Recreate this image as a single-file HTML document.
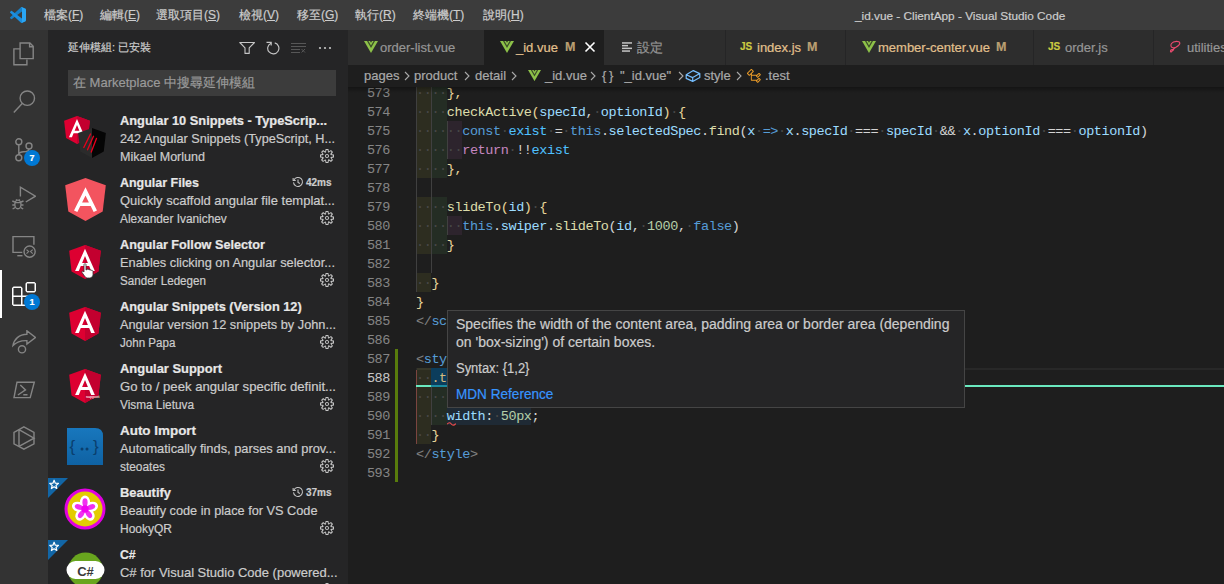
<!DOCTYPE html><html><head><meta charset="utf-8"><style>
*{margin:0;padding:0;box-sizing:border-box}
html,body{width:1224px;height:584px;overflow:hidden;background:#1e1e1e;font-family:"Liberation Sans",sans-serif;position:relative;-webkit-text-stroke-width:0.2px}
.a{position:absolute;white-space:nowrap}
#title{position:absolute;left:0;top:0;width:1224px;height:30px;background:#3c3c3c;color:#cccccc;font-size:12px}
#title u{text-decoration:underline;text-underline-offset:1px}
#title .m{position:absolute;top:8px;line-height:15px;white-space:nowrap}
#act{position:absolute;left:0;top:30px;width:48px;height:554px;background:#333333}
#side{position:absolute;left:48px;top:30px;width:300px;height:554px;background:#252526;overflow:hidden}
#tabs{position:absolute;left:348px;top:30px;width:876px;height:35px;background:#252526;overflow:hidden}
.tab{position:absolute;top:0;height:35px;background:#2d2d2d;font-size:13px;color:#969696;white-space:nowrap}
.tab .tx{position:absolute;top:10px;line-height:15px}
#crumb{position:absolute;left:348px;top:65px;width:876px;height:22px;background:#1e1e1e;color:#a9a9a9;font-size:13px;white-space:nowrap;z-index:5}
#crumb .a{top:3px;line-height:16px}
#editor{position:absolute;left:348px;top:65px;width:876px;height:519px;background:#1e1e1e;overflow:hidden}
.ln{position:absolute;left:0;width:42px;text-align:right;font-family:"Liberation Mono",monospace;font-size:13.5px;letter-spacing:-0.4px;color:#858585;height:19px;line-height:21px}
.cl{position:absolute;left:68px;height:19px;line-height:21px;font-family:"Liberation Mono",monospace;font-size:13.5px;letter-spacing:-0.4px;color:#d4d4d4;white-space:pre}
.ext .t{font-weight:bold;color:#e7e7e7;font-size:12.5px}
.ext .d{color:#cccccc;font-size:13px}
.ext .au{color:#cccccc;font-size:12px}
.cl,.ln{-webkit-text-stroke-width:0.05px}
#hover{position:absolute;left:447px;top:310px;width:518px;height:98px;background:#252526;border:1px solid #454545;color:#cccccc;font-size:14px;z-index:10}
</style></head><body>
<div id="title">
<svg class="a" style="left:10px;top:7px" width="16" height="16" viewBox="0 0 100 100"><path fill="#1680c8" d="M96.46 10.8L75.86 0.88C73.47 -0.27 70.62 0.21 68.75 2.08L1.3 63.58C-0.52 65.24 -0.51 68.09 1.3 69.75L6.81 74.75C8.3 76.1 10.53 76.2 12.13 74.99L93.36 13.37C96.09 11.3 100 13.25 100 16.67V16.43C100 14.03 98.62 11.84 96.46 10.8Z"/><path fill="#1b8fe0" d="M96.46 89.2L75.86 99.12C73.47 100.27 70.62 99.79 68.75 97.92L1.3 36.42C-0.52 34.76 -0.51 31.91 1.3 30.25L6.81 25.25C8.3 23.9 10.53 23.8 12.13 25.01L93.36 86.63C96.09 88.7 100 86.75 100 83.33V83.57C100 85.97 98.62 88.16 96.46 89.2Z"/><path fill="#2aa6f4" d="M75.86 99.13C73.47 100.27 70.62 99.79 68.75 97.92C71.06 100.22 75 98.59 75 95.33V4.67C75 1.41 71.06 -0.22 68.75 2.08C70.62 0.21 73.47 -0.27 75.86 0.87L96.46 10.78C98.62 11.82 100 14.01 100 16.41V83.59C100 85.99 98.62 88.18 96.46 89.22Z"/></svg>
<span class="m" style="left:44px;top:7.5px">檔案(<u>F</u>)</span>
<span class="m" style="left:100px;top:7.5px">編輯(<u>E</u>)</span>
<span class="m" style="left:156px;top:7.5px">選取項目(<u>S</u>)</span>
<span class="m" style="left:239px;top:7.5px">檢視(<u>V</u>)</span>
<span class="m" style="left:297px;top:7.5px">移至(<u>G</u>)</span>
<span class="m" style="left:355px;top:7.5px">執行(<u>R</u>)</span>
<span class="m" style="left:413px;top:7.5px">終端機(<u>T</u>)</span>
<span class="m" style="left:483px;top:7.5px">說明(<u>H</u>)</span>
<span class="m" style="left:855px;font-size:11.8px;top:9px">_id.vue - ClientApp - Visual Studio Code</span>
</div>
<div id="act">
<svg class="a" style="left:12px;top:12px" width="24" height="24" viewBox="0 0 24 24" fill="none" stroke="#858585" stroke-width="1.4"><path d="M8 6.9 H1.9 V22.8 H14.9 V17.6"/><path d="M8.1 1 H17.9 L21.2 4.3 V16.6 H8.1 Z"/><path d="M17.6 1 V4.7 H21.2"/></svg>
<svg class="a" style="left:12px;top:60px" width="24" height="24" viewBox="0 0 24 24" fill="none" stroke="#858585" stroke-width="1.4"><circle cx="15.3" cy="8.2" r="7.2"/><path d="M10.2 13.4 L1.8 22.4"/></svg>
<svg class="a" style="left:12px;top:108px" width="24" height="24" viewBox="0 0 24 24" fill="none" stroke="#858585" stroke-width="1.4"><circle cx="6.8" cy="3.8" r="3"/><circle cx="6.8" cy="19.8" r="3"/><circle cx="17" cy="8" r="3"/><path d="M6.8 6.8 V16.8 M17 11 C17 13.5 15 13.8 11.5 13.8 C9 13.8 7.5 14.5 6.8 16"/></svg>
<svg class="a" style="left:12px;top:156px" width="24" height="24" viewBox="0 0 24 24" fill="none" stroke="#858585" stroke-width="1.4"><path d="M8.4 10.5 V1.2 L23.4 10.2 L13.8 16"/><ellipse cx="5.9" cy="18.4" rx="3.1" ry="4.3"/><path d="M3 16.6 H8.8 M0.3 15 L2.8 16 M11.5 15 L9 16 M0.3 19 H2.7 M11.5 19 H9.1 M0.6 23 L3 21.6 M11.2 23 L8.8 21.6 M4 13.6 L5 14.6 M7.8 13.6 L6.8 14.6"/></svg>
<svg class="a" style="left:12px;top:204px" width="24" height="24" viewBox="0 0 24 24" fill="none" stroke="#858585" stroke-width="1.4"><path d="M21.9 10.8 V2.6 H1 V18.4 H10.3"/><path d="M5.3 21.7 H10.5"/><circle cx="17.6" cy="17.6" r="5.6"/><path d="M14.5 15.6 L16.6 17.6 L14.5 19.6 M20.7 15.6 L18.6 17.6 L20.7 19.6" stroke-width="1.2"/></svg>
<div class="a" style="left:0;top:240px;width:2px;height:48px;background:#ffffff"></div>
<svg class="a" style="left:12px;top:252px" width="24" height="24" viewBox="0 0 24 24" fill="#ffffff"><path d="M13.5 1.5L15 0h7.5L24 1.5V9l-1.5 1.5H15L13.5 9V1.5zm9 0H15V9h7.5V1.5zM0 15V6l1.5-1.5H9L10.5 6v7.5H18l1.5 1.5v7.5L18 24H1.5L0 22.5V15zm9-1.5V6H1.5v7.5H9zM9 15H1.5v7.5H9V15zm1.5 7.5H18V15h-7.5v7.5z"/></svg>
<svg class="a" style="left:12px;top:300px" width="24" height="24" viewBox="0 0 24 24" fill="none" stroke="#858585" stroke-width="1.4"><path d="M1 15.5 C2 9.5 7 4.3 14.9 4.3 V0.8 L23.4 7.5 L14.9 14 V10.6 C9 10.4 4.5 11.8 1 15.5 Z"/><circle cx="10" cy="19.3" r="3.6"/></svg>
<svg class="a" style="left:12px;top:348px" width="24" height="24" viewBox="0 0 24 24" fill="none" stroke="#858585" stroke-width="1.4"><path d="M5 4.2 H22.3 L18.2 19.6 H2 Z"/><path d="M8.3 7 L13.5 11.9 L5.9 17 M11.3 16.8 H15.5"/></svg>
<svg class="a" style="left:12px;top:396px" width="24" height="24" viewBox="0 0 24 24" fill="none" stroke="#858585" stroke-width="1.4"><path d="M11.9 0.8 L22 6.4 V17.9 L11.9 23.2 L2 17.9 V6.4 Z"/><path d="M7 3.6 V20.3 M7 3.6 L22 12.2 L7 20.3"/></svg>
<div class="a" style="left:24px;top:120px;width:16px;height:16px;border-radius:8px;background:#0078d4;color:#fff;font-size:9px;font-weight:bold;text-align:center;line-height:16px">7</div>
<div class="a" style="left:24px;top:264px;width:16px;height:16px;border-radius:8px;background:#0078d4;color:#fff;font-size:9px;font-weight:bold;text-align:center;line-height:16px">1</div>
</div>
<div id="side">
<span class="a" style="left:20px;top:10px;line-height:15px;font-size:11px;color:#cccccc">延伸模組: 已安裝</span>
<svg class="a" style="left:190px;top:11px" width="18" height="14" viewBox="0 0 18 14" fill="none" stroke="#c5c5c5" stroke-width="1.1" stroke-linejoin="round"><path d="M1.8 1.5 H16.5 L11.2 6.9 V12.4 H7 V6.9 Z"/></svg>
<svg class="a" style="left:218px;top:11px" width="14" height="14" viewBox="0 0 14 14" fill="none" stroke="#c5c5c5" stroke-width="1.15"><path d="M5.02 2.19 A5.6 5.6 0 1 0 8.75 1.89"/><path d="M0.5 1.3 H5.2 V4.5"/></svg>
<svg class="a" style="left:243px;top:12px" width="16" height="12" viewBox="0 0 16 12" fill="none" stroke="#575757" stroke-width="1"><path d="M0 1.5 H15 M0 4.5 H15 M0 7.5 H9 M0 10.5 H9 M10.5 7 L14 10.5 M14 7 L10.5 10.5"/></svg>
<svg class="a" style="left:269px;top:10px" width="16" height="16" viewBox="0 0 16 16" fill="#c5c5c5"><circle cx="3" cy="8" r="1.1"/><circle cx="8" cy="8" r="1.1"/><circle cx="13" cy="8" r="1.1"/></svg>
<div class="a" style="left:20px;top:40px;width:268px;height:26px;background:#3c3c3c"></div>
<span class="a" style="left:25px;top:45px;line-height:16px;font-size:13px;color:#9a9a9a">在 Marketplace 中搜尋延伸模組</span>
<div class="ext">
<span class="a t" style="left:72px;top:83px;line-height:16px;transform:scaleX(1.0253);transform-origin:0 0;">Angular 10 Snippets - TypeScrip...</span>
<span class="a d" style="left:72px;top:101px;line-height:16px;transform:scaleX(0.9755);transform-origin:0 0;">242 Angular Snippets (TypeScript, H...</span>
<span class="a au" style="left:72px;top:119px;line-height:16px;transform:scaleX(1.0442);transform-origin:0 0;">Mikael Morlund</span>
<svg class="a" style="left:271px;top:118px" width="16" height="16" viewBox="0 0 16 16" fill="#c5c5c5"><path fill-rule="evenodd" d="M9.1 4.4L8.6 2H7.4l-.5 2.4-.7.3-2-1.3-.9.8 1.3 2-.2.7-2.4.5v1.2l2.4.5.3.8-1.3 2 .8.8 2-1.3.8.3.4 2.3h1.2l.5-2.4.8-.3 2 1.3.8-.8-1.3-2 .3-.8 2.3-.4V7.4l-2.4-.5-.3-.8 1.3-2-.8-.8-2 1.3-.7-.2zM9.4 1l.5 2.4L12 2.1l2 2-1.4 2.1 2.4.4v2.8l-2.4.5L14 12l-2 2-2.1-1.4-.5 2.4H6.6l-.5-2.4L4 13.9l-2-2 1.4-2.1L1 9.4V6.6l2.4-.5L2.1 4l2-2 2.1 1.4.4-2.4h2.8zm.6 7c0 1.1-.9 2-2 2s-2-.9-2-2 .9-2 2-2 2 .9 2 2zM8 9c.6 0 1-.4 1-1s-.4-1-1-1-1 .4-1 1 .4 1 1 1z"/></svg>
</div>
<div class="ext">
<span class="a t" style="left:72px;top:145px;line-height:16px;transform:scaleX(0.9975);transform-origin:0 0;">Angular Files</span>
<span class="a d" style="left:72px;top:163px;line-height:16px;transform:scaleX(0.9995);transform-origin:0 0;">Quickly scaffold angular file templat...</span>
<span class="a au" style="left:72px;top:181px;line-height:16px;transform:scaleX(0.9880);transform-origin:0 0;">Alexander Ivanichev</span>
<svg class="a" style="left:271px;top:180px" width="16" height="16" viewBox="0 0 16 16" fill="#c5c5c5"><path fill-rule="evenodd" d="M9.1 4.4L8.6 2H7.4l-.5 2.4-.7.3-2-1.3-.9.8 1.3 2-.2.7-2.4.5v1.2l2.4.5.3.8-1.3 2 .8.8 2-1.3.8.3.4 2.3h1.2l.5-2.4.8-.3 2 1.3.8-.8-1.3-2 .3-.8 2.3-.4V7.4l-2.4-.5-.3-.8 1.3-2-.8-.8-2 1.3-.7-.2zM9.4 1l.5 2.4L12 2.1l2 2-1.4 2.1 2.4.4v2.8l-2.4.5L14 12l-2 2-2.1-1.4-.5 2.4H6.6l-.5-2.4L4 13.9l-2-2 1.4-2.1L1 9.4V6.6l2.4-.5L2.1 4l2-2 2.1 1.4.4-2.4h2.8zm.6 7c0 1.1-.9 2-2 2s-2-.9-2-2 .9-2 2-2 2 .9 2 2zM8 9c.6 0 1-.4 1-1s-.4-1-1-1-1 .4-1 1 .4 1 1 1z"/></svg>
<svg class="a" style="left:244px;top:146px" width="12" height="12" viewBox="0 0 16 16" fill="none" stroke="#c5c5c5" stroke-width="1.4"><path d="M2.5 5.5 A6 6 0 1 1 2 8.5"/><path d="M1.5 2.5 V6 H5"/><path d="M8 4.5 V8.5 L10.5 10"/></svg>
<span class="a" style="left:258px;top:146px;line-height:14px;font-size:10px;font-weight:bold;color:#cccccc">42ms</span>
</div>
<div class="ext">
<span class="a t" style="left:72px;top:207px;line-height:16px;transform:scaleX(1.0133);transform-origin:0 0;">Angular Follow Selector</span>
<span class="a d" style="left:72px;top:225px;line-height:16px;transform:scaleX(0.9849);transform-origin:0 0;">Enables clicking on Angular selector...</span>
<span class="a au" style="left:72px;top:243px;line-height:16px;transform:scaleX(0.9685);transform-origin:0 0;">Sander Ledegen</span>
<svg class="a" style="left:271px;top:242px" width="16" height="16" viewBox="0 0 16 16" fill="#c5c5c5"><path fill-rule="evenodd" d="M9.1 4.4L8.6 2H7.4l-.5 2.4-.7.3-2-1.3-.9.8 1.3 2-.2.7-2.4.5v1.2l2.4.5.3.8-1.3 2 .8.8 2-1.3.8.3.4 2.3h1.2l.5-2.4.8-.3 2 1.3.8-.8-1.3-2 .3-.8 2.3-.4V7.4l-2.4-.5-.3-.8 1.3-2-.8-.8-2 1.3-.7-.2zM9.4 1l.5 2.4L12 2.1l2 2-1.4 2.1 2.4.4v2.8l-2.4.5L14 12l-2 2-2.1-1.4-.5 2.4H6.6l-.5-2.4L4 13.9l-2-2 1.4-2.1L1 9.4V6.6l2.4-.5L2.1 4l2-2 2.1 1.4.4-2.4h2.8zm.6 7c0 1.1-.9 2-2 2s-2-.9-2-2 .9-2 2-2 2 .9 2 2zM8 9c.6 0 1-.4 1-1s-.4-1-1-1-1 .4-1 1 .4 1 1 1z"/></svg>
</div>
<div class="ext">
<span class="a t" style="left:72px;top:269px;line-height:16px;transform:scaleX(1.0219);transform-origin:0 0;">Angular Snippets (Version 12)</span>
<span class="a d" style="left:72px;top:287px;line-height:16px;transform:scaleX(0.9800);transform-origin:0 0;">Angular version 12 snippets by John...</span>
<span class="a au" style="left:72px;top:305px;line-height:16px;transform:scaleX(0.9652);transform-origin:0 0;">John Papa</span>
<svg class="a" style="left:271px;top:304px" width="16" height="16" viewBox="0 0 16 16" fill="#c5c5c5"><path fill-rule="evenodd" d="M9.1 4.4L8.6 2H7.4l-.5 2.4-.7.3-2-1.3-.9.8 1.3 2-.2.7-2.4.5v1.2l2.4.5.3.8-1.3 2 .8.8 2-1.3.8.3.4 2.3h1.2l.5-2.4.8-.3 2 1.3.8-.8-1.3-2 .3-.8 2.3-.4V7.4l-2.4-.5-.3-.8 1.3-2-.8-.8-2 1.3-.7-.2zM9.4 1l.5 2.4L12 2.1l2 2-1.4 2.1 2.4.4v2.8l-2.4.5L14 12l-2 2-2.1-1.4-.5 2.4H6.6l-.5-2.4L4 13.9l-2-2 1.4-2.1L1 9.4V6.6l2.4-.5L2.1 4l2-2 2.1 1.4.4-2.4h2.8zm.6 7c0 1.1-.9 2-2 2s-2-.9-2-2 .9-2 2-2 2 .9 2 2zM8 9c.6 0 1-.4 1-1s-.4-1-1-1-1 .4-1 1 .4 1 1 1z"/></svg>
</div>
<div class="ext">
<span class="a t" style="left:72px;top:331px;line-height:16px;transform:scaleX(1.0345);transform-origin:0 0;">Angular Support</span>
<span class="a d" style="left:72px;top:349px;line-height:16px;transform:scaleX(1.0098);transform-origin:0 0;">Go to / peek angular specific definit...</span>
<span class="a au" style="left:72px;top:367px;line-height:16px;transform:scaleX(0.9840);transform-origin:0 0;">Visma Lietuva</span>
<svg class="a" style="left:271px;top:366px" width="16" height="16" viewBox="0 0 16 16" fill="#c5c5c5"><path fill-rule="evenodd" d="M9.1 4.4L8.6 2H7.4l-.5 2.4-.7.3-2-1.3-.9.8 1.3 2-.2.7-2.4.5v1.2l2.4.5.3.8-1.3 2 .8.8 2-1.3.8.3.4 2.3h1.2l.5-2.4.8-.3 2 1.3.8-.8-1.3-2 .3-.8 2.3-.4V7.4l-2.4-.5-.3-.8 1.3-2-.8-.8-2 1.3-.7-.2zM9.4 1l.5 2.4L12 2.1l2 2-1.4 2.1 2.4.4v2.8l-2.4.5L14 12l-2 2-2.1-1.4-.5 2.4H6.6l-.5-2.4L4 13.9l-2-2 1.4-2.1L1 9.4V6.6l2.4-.5L2.1 4l2-2 2.1 1.4.4-2.4h2.8zm.6 7c0 1.1-.9 2-2 2s-2-.9-2-2 .9-2 2-2 2 .9 2 2zM8 9c.6 0 1-.4 1-1s-.4-1-1-1-1 .4-1 1 .4 1 1 1z"/></svg>
</div>
<div class="ext">
<span class="a t" style="left:72px;top:393px;line-height:16px;transform:scaleX(1.0734);transform-origin:0 0;">Auto Import</span>
<span class="a d" style="left:72px;top:411px;line-height:16px;transform:scaleX(0.9877);transform-origin:0 0;">Automatically finds, parses and prov...</span>
<span class="a au" style="left:72px;top:429px;line-height:16px;transform:scaleX(0.9912);transform-origin:0 0;">steoates</span>
<svg class="a" style="left:271px;top:428px" width="16" height="16" viewBox="0 0 16 16" fill="#c5c5c5"><path fill-rule="evenodd" d="M9.1 4.4L8.6 2H7.4l-.5 2.4-.7.3-2-1.3-.9.8 1.3 2-.2.7-2.4.5v1.2l2.4.5.3.8-1.3 2 .8.8 2-1.3.8.3.4 2.3h1.2l.5-2.4.8-.3 2 1.3.8-.8-1.3-2 .3-.8 2.3-.4V7.4l-2.4-.5-.3-.8 1.3-2-.8-.8-2 1.3-.7-.2zM9.4 1l.5 2.4L12 2.1l2 2-1.4 2.1 2.4.4v2.8l-2.4.5L14 12l-2 2-2.1-1.4-.5 2.4H6.6l-.5-2.4L4 13.9l-2-2 1.4-2.1L1 9.4V6.6l2.4-.5L2.1 4l2-2 2.1 1.4.4-2.4h2.8zm.6 7c0 1.1-.9 2-2 2s-2-.9-2-2 .9-2 2-2 2 .9 2 2zM8 9c.6 0 1-.4 1-1s-.4-1-1-1-1 .4-1 1 .4 1 1 1z"/></svg>
</div>
<div class="ext">
<span class="a t" style="left:72px;top:455px;line-height:16px;transform:scaleX(1.0345);transform-origin:0 0;">Beautify</span>
<span class="a d" style="left:72px;top:473px;line-height:16px;transform:scaleX(0.9797);transform-origin:0 0;">Beautify code in place for VS Code</span>
<span class="a au" style="left:72px;top:491px;line-height:16px;transform:scaleX(1.0000);transform-origin:0 0;">HookyQR</span>
<svg class="a" style="left:271px;top:490px" width="16" height="16" viewBox="0 0 16 16" fill="#c5c5c5"><path fill-rule="evenodd" d="M9.1 4.4L8.6 2H7.4l-.5 2.4-.7.3-2-1.3-.9.8 1.3 2-.2.7-2.4.5v1.2l2.4.5.3.8-1.3 2 .8.8 2-1.3.8.3.4 2.3h1.2l.5-2.4.8-.3 2 1.3.8-.8-1.3-2 .3-.8 2.3-.4V7.4l-2.4-.5-.3-.8 1.3-2-.8-.8-2 1.3-.7-.2zM9.4 1l.5 2.4L12 2.1l2 2-1.4 2.1 2.4.4v2.8l-2.4.5L14 12l-2 2-2.1-1.4-.5 2.4H6.6l-.5-2.4L4 13.9l-2-2 1.4-2.1L1 9.4V6.6l2.4-.5L2.1 4l2-2 2.1 1.4.4-2.4h2.8zm.6 7c0 1.1-.9 2-2 2s-2-.9-2-2 .9-2 2-2 2 .9 2 2zM8 9c.6 0 1-.4 1-1s-.4-1-1-1-1 .4-1 1 .4 1 1 1z"/></svg>
<svg class="a" style="left:244px;top:456px" width="12" height="12" viewBox="0 0 16 16" fill="none" stroke="#c5c5c5" stroke-width="1.4"><path d="M2.5 5.5 A6 6 0 1 1 2 8.5"/><path d="M1.5 2.5 V6 H5"/><path d="M8 4.5 V8.5 L10.5 10"/></svg>
<span class="a" style="left:258px;top:456px;line-height:14px;font-size:10px;font-weight:bold;color:#cccccc">37ms</span>
</div>
<div class="ext">
<span class="a t" style="left:72px;top:517px;line-height:16px;transform:scaleX(0.9812);transform-origin:0 0;">C#</span>
<span class="a d" style="left:72px;top:535px;line-height:16px;transform:scaleX(0.9977);transform-origin:0 0;">C# for Visual Studio Code (powered...</span>
<span class="a au" style="left:72px;top:553px;line-height:16px;transform:scaleX(1.0000);transform-origin:0 0;">Microsoft</span>
<svg class="a" style="left:271px;top:552px" width="16" height="16" viewBox="0 0 16 16" fill="#c5c5c5"><path fill-rule="evenodd" d="M9.1 4.4L8.6 2H7.4l-.5 2.4-.7.3-2-1.3-.9.8 1.3 2-.2.7-2.4.5v1.2l2.4.5.3.8-1.3 2 .8.8 2-1.3.8.3.4 2.3h1.2l.5-2.4.8-.3 2 1.3.8-.8-1.3-2 .3-.8 2.3-.4V7.4l-2.4-.5-.3-.8 1.3-2-.8-.8-2 1.3-.7-.2zM9.4 1l.5 2.4L12 2.1l2 2-1.4 2.1 2.4.4v2.8l-2.4.5L14 12l-2 2-2.1-1.4-.5 2.4H6.6l-.5-2.4L4 13.9l-2-2 1.4-2.1L1 9.4V6.6l2.4-.5L2.1 4l2-2 2.1 1.4.4-2.4h2.8zm.6 7c0 1.1-.9 2-2 2s-2-.9-2-2 .9-2 2-2 2 .9 2 2zM8 9c.6 0 1-.4 1-1s-.4-1-1-1-1 .4-1 1 .4 1 1 1z"/></svg>
</div>
<svg class="a" style="left:16px;top:86px" width="26" height="28" viewBox="31 30 188 200" preserveAspectRatio="none"><polygon fill="#dd0031" points="125,30 31.9,63.2 46.1,186.3 125,230 203.9,186.3 218.1,63.2"/><polygon fill="#c3002f" points="125,30 125,230 203.9,186.3 218.1,63.2"/><path fill="#fff" d="M125,52.1L66.8,182.6h21.7l11.7-29.2h49.4l11.7,29.2h21.7L125,52.1z M142,135.4H108l17-40.9L142,135.4z"/></svg>
<svg class="a" style="left:30px;top:98px" width="28" height="30" viewBox="31 30 188 200" preserveAspectRatio="none"><polygon fill="#2b2b2b" points="125,30 31.9,63.2 46.1,186.3 125,230"/><polygon fill="#050505" points="125,30 125,230 203.9,186.3 218.1,63.2"/><path d="M70 160 L115 70 M95 175 L135 85 M120 190 L155 100" stroke="#e8001c" stroke-width="9" stroke-linecap="round"/></svg>
<svg class="a" style="left:17px;top:148px" width="41" height="43" viewBox="31 30 188 200" preserveAspectRatio="none"><polygon fill="#f3545f" points="125,30 31.9,63.2 46.1,186.3 125,230 203.9,186.3 218.1,63.2"/><path d="M80 185 L125 92 L170 185 M98 152 H152" fill="none" stroke="#fff" stroke-width="17"/></svg>
<svg class="a" style="left:21px;top:215px" width="32" height="34" viewBox="31 30 188 200" preserveAspectRatio="none"><polygon fill="#dd0031" points="125,30 31.9,63.2 46.1,186.3 125,230 203.9,186.3 218.1,63.2"/><polygon fill="#c3002f" points="125,30 125,230 203.9,186.3 218.1,63.2"/><path fill="#fff" d="M125,52.1L66.8,182.6h21.7l11.7-29.2h49.4l11.7,29.2h21.7L125,52.1z M142,135.4H108l17-40.9L142,135.4z"/></svg>
<svg class="a" style="left:33px;top:233px" width="14" height="16" viewBox="0 0 14 16"><path d="M3 1.5 C3 0.5 5 0.5 5 1.5 V7 L6 6.5 C6.5 6 8 6 8 7 C8.5 6.5 10 6.5 10 7.5 C10.5 7 12 7.3 12 8.5 V11.5 C12 13.5 10.5 15 8.5 15 H6.5 C5 15 4.5 14 3.5 13 L1 9.5 C0.5 8.5 1.5 7.8 2.3 8.4 L3 9 Z" fill="#fff" stroke="#333" stroke-width="0.8"/></svg>
<svg class="a" style="left:21px;top:277px" width="32" height="34" viewBox="31 30 188 200" preserveAspectRatio="none"><polygon fill="#dd0031" points="125,30 31.9,63.2 46.1,186.3 125,230 203.9,186.3 218.1,63.2"/><polygon fill="#c3002f" points="125,30 125,230 203.9,186.3 218.1,63.2"/><path fill="#fff" d="M125,52.1L66.8,182.6h21.7l11.7-29.2h49.4l11.7,29.2h21.7L125,52.1z M142,135.4H108l17-40.9L142,135.4z"/></svg>
<svg class="a" style="left:21px;top:339px" width="32" height="34" viewBox="31 30 188 200" preserveAspectRatio="none"><polygon fill="#dd0031" points="125,30 31.9,63.2 46.1,186.3 125,230 203.9,186.3 218.1,63.2"/><polygon fill="#c3002f" points="125,30 125,230 203.9,186.3 218.1,63.2"/><path fill="#fff" d="M125,52.1L66.8,182.6h21.7l11.7-29.2h49.4l11.7,29.2h21.7L125,52.1z M142,135.4H108l17-40.9L142,135.4z"/></svg>
<span class="a" style="left:38px;top:364px;font-size:4px;line-height:5px;color:#f4c0c8">support</span>
<svg class="a" style="left:19px;top:398px" width="36" height="37" viewBox="0 0 36 37"><defs><linearGradient id="ai" x1="0" y1="0" x2="0" y2="1"><stop offset="0" stop-color="#1877bd"/><stop offset="1" stop-color="#0f62a3"/></linearGradient></defs><path d="M0 0 H28 Q36 0 36 8 V37 H0 Z" fill="url(#ai)"/><text x="2.5" y="24" font-family="Liberation Sans" font-size="17" fill="#0a3f6e">{</text><text x="26" y="24" font-family="Liberation Sans" font-size="17" fill="#0a3f6e">}</text><circle cx="15" cy="21" r="1.5" fill="#0a3f6e"/><circle cx="20" cy="21" r="1.5" fill="#0a3f6e"/></svg>
<svg class="a" style="left:16px;top:458px" width="42" height="42" viewBox="0 0 42 42"><circle cx="21" cy="21" r="19" fill="#e3cc00" stroke="#e000e0" stroke-width="3"/><g fill="#ffffff"><ellipse cx="21" cy="14" rx="5" ry="6.5" transform="rotate(0 21 21)"/><ellipse cx="21" cy="14" rx="5" ry="6.5" transform="rotate(72 21 21)"/><ellipse cx="21" cy="14" rx="5" ry="6.5" transform="rotate(144 21 21)"/><ellipse cx="21" cy="14" rx="5" ry="6.5" transform="rotate(216 21 21)"/><ellipse cx="21" cy="14" rx="5" ry="6.5" transform="rotate(288 21 21)"/></g><g fill="#f030f0"><ellipse cx="21" cy="14.5" rx="2.6" ry="4.2" transform="rotate(0 21 21)"/><ellipse cx="21" cy="14.5" rx="2.6" ry="4.2" transform="rotate(72 21 21)"/><ellipse cx="21" cy="14.5" rx="2.6" ry="4.2" transform="rotate(144 21 21)"/><ellipse cx="21" cy="14.5" rx="2.6" ry="4.2" transform="rotate(216 21 21)"/><ellipse cx="21" cy="14.5" rx="2.6" ry="4.2" transform="rotate(288 21 21)"/></g><circle cx="21" cy="21" r="3.8" fill="#f000f0"/></svg>
<svg class="a" style="left:18px;top:521px" width="40" height="40" viewBox="0 0 40 40"><circle cx="19.5" cy="19" r="17.5" fill="#68a51e"/><rect x="0.5" y="10" width="38" height="18" fill="#fff" rx="9"/><text x="19.5" y="24.5" text-anchor="middle" font-family="Liberation Sans" font-weight="bold" font-size="13" fill="#3a3a3a">C#</text></svg>
<svg class="a" style="left:0;top:448px" width="20" height="20" viewBox="0 0 20 20"><polygon points="0,0 20,0 0,20" fill="#1266a6"/><polygon fill="none" stroke="#fff" stroke-width="1.2" stroke-linejoin="round" points="6.10,2.20 7.28,5.18 10.47,5.38 8.00,7.42 8.80,10.52 6.10,8.80 3.40,10.52 4.20,7.42 1.73,5.38 4.92,5.18"/></svg>
<svg class="a" style="left:0;top:510px" width="20" height="20" viewBox="0 0 20 20"><polygon points="0,0 20,0 0,20" fill="#1266a6"/><polygon fill="none" stroke="#fff" stroke-width="1.2" stroke-linejoin="round" points="6.10,2.20 7.28,5.18 10.47,5.38 8.00,7.42 8.80,10.52 6.10,8.80 3.40,10.52 4.20,7.42 1.73,5.38 4.92,5.18"/></svg>
</div>
<div id="tabs">
<div class="tab" style="left:0px;width:136px;background:#2d2d2d">
<svg class="a" style="left:16px;top:11px" width="14" height="12.0" viewBox="0 0 14 12"><polygon fill="#8dc149" points="0,0 14,0 7,12"/><polygon fill="#3a4a28" points="3,0 11,0 7,7"/><polygon fill="#8dc149" points="4.4,0 9.6,0 7,4.5"/><polygon fill="#2f3a22" points="6,0 8,0 7,1.7"/></svg>
<span class="tx" style="left:32px;color:#969696">order-list.vue</span>
</div>
<div class="tab" style="left:136px;width:120px;background:#1e1e1e">
<svg class="a" style="left:16px;top:11px" width="14" height="12.0" viewBox="0 0 14 12"><polygon fill="#8dc149" points="0,0 14,0 7,12"/><polygon fill="#3a4a28" points="3,0 11,0 7,7"/><polygon fill="#8dc149" points="4.4,0 9.6,0 7,4.5"/><polygon fill="#2f3a22" points="6,0 8,0 7,1.7"/></svg>
<span class="tx" style="left:32px;color:#e2c08d">_id.vue</span>
<span class="tx" style="left:81px;color:#bb9f72;font-size:12.5px;font-weight:bold">M</span>
<svg class="a" style="left:100px;top:11px" width="12" height="12" viewBox="0 0 12 12" stroke="#ffffff" stroke-width="1.6"><path d="M1.5 1.5 L10.5 10.5 M10.5 1.5 L1.5 10.5"/></svg>
</div>
<div class="tab" style="left:256px;width:121px;background:#2d2d2d">
<svg class="a" style="left:18px;top:11px" width="12" height="12" viewBox="0 0 12 12" fill="#c5c5c5"><rect x="0" y="1.2" width="10" height="1.5"/><rect x="0" y="3.9" width="6" height="1.5"/><rect x="0" y="6.6" width="10" height="1.5"/><rect x="0" y="9.3" width="8" height="1.5"/></svg>
<span class="tx" style="left:33px;color:#969696">設定</span>
</div>
<div class="tab" style="left:378px;width:119px;background:#2d2d2d">
<span class="a" style="left:14px;top:11px;font-size:10px;font-weight:bold;color:#cbcb41;line-height:12px">JS</span>
<span class="tx" style="left:31px;color:#e2c08d">index.js</span>
<span class="tx" style="left:81px;color:#bb9f72;font-size:12.5px;font-weight:bold">M</span>
</div>
<div class="tab" style="left:498px;width:187px;background:#2d2d2d">
<svg class="a" style="left:16px;top:11px" width="14" height="12.0" viewBox="0 0 14 12"><polygon fill="#8dc149" points="0,0 14,0 7,12"/><polygon fill="#3a4a28" points="3,0 11,0 7,7"/><polygon fill="#8dc149" points="4.4,0 9.6,0 7,4.5"/><polygon fill="#2f3a22" points="6,0 8,0 7,1.7"/></svg>
<span class="tx" style="left:32px;color:#e2c08d">member-center.vue</span>
<span class="tx" style="left:150px;color:#bb9f72;font-size:12.5px;font-weight:bold">M</span>
</div>
<div class="tab" style="left:686px;width:119px;background:#2d2d2d">
<span class="a" style="left:14px;top:11px;font-size:10px;font-weight:bold;color:#cbcb41;line-height:12px">JS</span>
<span class="tx" style="left:31px;color:#969696">order.js</span>
</div>
<div class="tab" style="left:806px;width:199px;background:#2d2d2d">
<svg class="a" style="left:15px;top:10px" width="12" height="14" viewBox="0 0 12 14" fill="none" stroke="#e84a6e" stroke-width="1.2"><path d="M5.5 7.5 C2.5 8.5 0.8 5.8 2.5 3.5 C4.5 0.8 10.8 0.6 10.8 3.2 C10.8 6.2 5.5 7 4.3 9.3 C3.3 11.3 1.5 13 1.5 11 C1.5 9.5 3.8 9.3 5 10.2"/></svg>
<span class="tx" style="left:33px;color:#969696">utilities</span>
</div>
</div>
<div id="crumb">
<span class="a" style="left:16px">pages</span>
<svg class="a" style="left:55px;top:6px" width="8" height="10" viewBox="0 0 8 10" fill="none" stroke="#a9a9a9" stroke-width="1.1"><path d="M2 1 L6 5 L2 9"/></svg>
<span class="a" style="left:66px">product</span>
<svg class="a" style="left:115px;top:6px" width="8" height="10" viewBox="0 0 8 10" fill="none" stroke="#a9a9a9" stroke-width="1.1"><path d="M2 1 L6 5 L2 9"/></svg>
<span class="a" style="left:127px">detail</span>
<svg class="a" style="left:162px;top:6px" width="8" height="10" viewBox="0 0 8 10" fill="none" stroke="#a9a9a9" stroke-width="1.1"><path d="M2 1 L6 5 L2 9"/></svg>
<svg class="a" style="left:180px;top:5px" width="13" height="11.1" viewBox="0 0 14 12"><polygon fill="#8dc149" points="0,0 14,0 7,12"/><polygon fill="#3a4a28" points="3,0 11,0 7,7"/><polygon fill="#8dc149" points="4.4,0 9.6,0 7,4.5"/><polygon fill="#2f3a22" points="6,0 8,0 7,1.7"/></svg>
<span class="a" style="left:197px">_id.vue</span>
<svg class="a" style="left:241px;top:6px" width="8" height="10" viewBox="0 0 8 10" fill="none" stroke="#a9a9a9" stroke-width="1.1"><path d="M2 1 L6 5 L2 9"/></svg>
<span class="a" style="left:254px;letter-spacing:-0.5px">{ }</span>
<span class="a" style="left:272px">"_id.vue"</span>
<svg class="a" style="left:329px;top:6px" width="8" height="10" viewBox="0 0 8 10" fill="none" stroke="#a9a9a9" stroke-width="1.1"><path d="M2 1 L6 5 L2 9"/></svg>
<svg class="a" style="left:337px;top:4px" width="16" height="14" viewBox="0 0 16 14" fill="none" stroke="#75beff" stroke-width="1.2" stroke-linejoin="round"><path d="M1.2 5.8 L8.3 1.6 L14.8 4.6 L7.7 8.6 Z M1.2 5.8 V9.4 L7.7 12.4 L14.8 8.4 V4.6 M7.7 8.6 V12.4"/></svg>
<span class="a" style="left:356px">style</span>
<svg class="a" style="left:387px;top:6px" width="8" height="10" viewBox="0 0 8 10" fill="none" stroke="#a9a9a9" stroke-width="1.1"><path d="M2 1 L6 5 L2 9"/></svg>
<svg class="a" style="left:398px;top:3px" width="16" height="16" viewBox="0 0 16 16" fill="#ee9d28"><path d="M11.34 9.71h.71l2.67-2.67v-.71L13.38 5h-.7l-1.82 1.81h-5V5.56l1.86-1.86V3l-2-2H5L1 5v.71l2 2h.71l1.14-1.15v5.79l.5.5H10v.52l1.33 1.34h.71l2.67-2.67v-.71L13.37 10h-.7l-1.86 1.85h-5v-4H10v.48l1.34 1.38zm1.69-3.65l.63.63-2 2-.63-.63 2-2zm0 5l.63.63-2 2-.63-.63 2-2zM3.35 6.65l-1.29-1.3 3.29-3.29 1.3 1.29-3.3 3.3z"/></svg>
<span class="a" style="left:417px">.test</span>
</div>
<div id="editor">
<div class="a" style="left:68.0px;top:18px;width:15.4px;height:19px;background:#2d2d20"></div>
<div class="a" style="left:83.4px;top:18px;width:15.4px;height:19px;background:#242d24"></div>
<div class="a" style="left:68.0px;top:37px;width:15.4px;height:19px;background:#2d2d20"></div>
<div class="a" style="left:83.4px;top:37px;width:15.4px;height:19px;background:#242d24"></div>
<div class="a" style="left:68.0px;top:56px;width:15.4px;height:19px;background:#2d2d20"></div>
<div class="a" style="left:83.4px;top:56px;width:15.4px;height:19px;background:#242d24"></div>
<div class="a" style="left:98.8px;top:56px;width:15.4px;height:19px;background:#2d242d"></div>
<div class="a" style="left:68.0px;top:75px;width:15.4px;height:19px;background:#2d2d20"></div>
<div class="a" style="left:83.4px;top:75px;width:15.4px;height:19px;background:#242d24"></div>
<div class="a" style="left:98.8px;top:75px;width:15.4px;height:19px;background:#2d242d"></div>
<div class="a" style="left:68.0px;top:94px;width:15.4px;height:19px;background:#2d2d20"></div>
<div class="a" style="left:83.4px;top:94px;width:15.4px;height:19px;background:#242d24"></div>
<div class="a" style="left:68.0px;top:132px;width:15.4px;height:19px;background:#2d2d20"></div>
<div class="a" style="left:83.4px;top:132px;width:15.4px;height:19px;background:#242d24"></div>
<div class="a" style="left:68.0px;top:151px;width:15.4px;height:19px;background:#2d2d20"></div>
<div class="a" style="left:83.4px;top:151px;width:15.4px;height:19px;background:#242d24"></div>
<div class="a" style="left:98.8px;top:151px;width:15.4px;height:19px;background:#2d242d"></div>
<div class="a" style="left:68.0px;top:170px;width:15.4px;height:19px;background:#2d2d20"></div>
<div class="a" style="left:83.4px;top:170px;width:15.4px;height:19px;background:#242d24"></div>
<div class="a" style="left:68.0px;top:208px;width:15.4px;height:19px;background:#2d2d20"></div>
<div class="a" style="left:68.0px;top:303px;width:15.4px;height:19px;background:#2d2d20"></div>
<div class="a" style="left:68.0px;top:322px;width:15.4px;height:19px;background:#2d2d20"></div>
<div class="a" style="left:83.4px;top:322px;width:15.4px;height:19px;background:#242d24"></div>
<div class="a" style="left:68.0px;top:341px;width:15.4px;height:19px;background:#2d2d20"></div>
<div class="a" style="left:83.4px;top:341px;width:15.4px;height:19px;background:#242d24"></div>
<div class="a" style="left:68.0px;top:360px;width:15.4px;height:19px;background:#2d2d20"></div>
<div class="a" style="left:68.0px;top:113px;width:1px;height:19px;background:#404040"></div>
<div class="a" style="left:83.4px;top:113px;width:1px;height:19px;background:#404040"></div>
<div class="a" style="left:68.0px;top:189px;width:1px;height:19px;background:#404040"></div>
<div class="a" style="left:83.4px;top:189px;width:1px;height:19px;background:#404040"></div>
<div class="a" style="left:68px;top:18px;width:1px;height:209px;background:#404040"></div>
<div class="a" style="left:83.4px;top:18px;width:1px;height:190px;background:#404040"></div>
<div class="a" style="left:83.4px;top:322px;width:1px;height:38px;background:#404040"></div>
<div class="a" style="left:98.8px;top:56px;width:1px;height:19px;background:#404040"></div>
<div class="a" style="left:98.8px;top:75px;width:1px;height:19px;background:#404040"></div>
<div class="a" style="left:98.8px;top:151px;width:1px;height:19px;background:#404040"></div>
<div class="a" style="left:68px;top:303px;width:1px;height:76px;background:#7b4540"></div>
<div class="a" style="left:68px;top:303px;width:808px;height:19px;border-top:2px solid #282828;border-bottom:2px solid #282828"></div>
<div class="a" style="left:69px;top:303px;width:14.4px;height:2px;background:#37372a"></div>
<div class="a" style="left:83.4px;top:303px;width:15.4px;height:17px;background:#0c3d5c"></div>
<div class="a" style="left:68px;top:320px;width:808px;height:2px;background:#6ae9bf"></div>
<div class="a" style="left:83.4px;top:320px;width:15.4px;height:2px;background:#1b8aa0"></div>
<div class="a" style="left:98.8px;top:341px;width:84.7px;height:19px;background:#1f2a35"></div>
<div class="a" style="left:47px;top:284px;width:3px;height:133px;background:#587c0c"></div>
<div class="ln" style="top:18px;color:#858585">573</div>
<div class="ln" style="top:37px;color:#858585">574</div>
<div class="ln" style="top:56px;color:#858585">575</div>
<div class="ln" style="top:75px;color:#858585">576</div>
<div class="ln" style="top:94px;color:#858585">577</div>
<div class="ln" style="top:113px;color:#858585">578</div>
<div class="ln" style="top:132px;color:#858585">579</div>
<div class="ln" style="top:151px;color:#858585">580</div>
<div class="ln" style="top:170px;color:#858585">581</div>
<div class="ln" style="top:189px;color:#858585">582</div>
<div class="ln" style="top:208px;color:#858585">583</div>
<div class="ln" style="top:227px;color:#858585">584</div>
<div class="ln" style="top:246px;color:#858585">585</div>
<div class="ln" style="top:265px;color:#858585">586</div>
<div class="ln" style="top:284px;color:#858585">587</div>
<div class="ln" style="top:303px;color:#c6c6c6">588</div>
<div class="ln" style="top:322px;color:#858585">589</div>
<div class="ln" style="top:341px;color:#858585">590</div>
<div class="ln" style="top:360px;color:#858585">591</div>
<div class="ln" style="top:379px;color:#858585">592</div>
<div class="ln" style="top:398px;color:#858585">593</div>
<div class="cl" style="top:18px"><span style="color:#484848">····</span><span style="color:#e6d59a">},</span></div>
<div class="cl" style="top:37px"><span style="color:#484848">····</span><span style="color:#dcdcaa">checkActive</span><span style="color:#e6d59a">(</span><span style="color:#9cdcfe">specId</span><span style="color:#d4d4d4">,</span><span style="color:#484848">·</span><span style="color:#9cdcfe">optionId</span><span style="color:#e6d59a">)</span><span style="color:#484848">·</span><span style="color:#e6d59a">{</span></div>
<div class="cl" style="top:56px"><span style="color:#484848">······</span><span style="color:#569cd6">const</span><span style="color:#484848">·</span><span style="color:#4fc1ff">exist</span><span style="color:#484848">·</span><span style="color:#d4d4d4">=</span><span style="color:#484848">·</span><span style="color:#569cd6">this</span><span style="color:#d4d4d4">.</span><span style="color:#9cdcfe">selectedSpec</span><span style="color:#d4d4d4">.</span><span style="color:#dcdcaa">find</span><span style="color:#d4d4d4">(</span><span style="color:#9cdcfe">x</span><span style="color:#484848">·</span><span style="color:#569cd6">=&gt;</span><span style="color:#484848">·</span><span style="color:#9cdcfe">x</span><span style="color:#d4d4d4">.</span><span style="color:#9cdcfe">specId</span><span style="color:#484848">·</span><span style="color:#d4d4d4">===</span><span style="color:#484848">·</span><span style="color:#9cdcfe">specId</span><span style="color:#484848">·</span><span style="color:#d4d4d4">&amp;&amp;</span><span style="color:#484848">·</span><span style="color:#9cdcfe">x</span><span style="color:#d4d4d4">.</span><span style="color:#9cdcfe">optionId</span><span style="color:#484848">·</span><span style="color:#d4d4d4">===</span><span style="color:#484848">·</span><span style="color:#9cdcfe">optionId</span><span style="color:#d4d4d4">)</span></div>
<div class="cl" style="top:75px"><span style="color:#484848">······</span><span style="color:#c586c0">return</span><span style="color:#484848">·</span><span style="color:#d4d4d4">!!</span><span style="color:#4fc1ff">exist</span></div>
<div class="cl" style="top:94px"><span style="color:#484848">····</span><span style="color:#e6d59a">},</span></div>
<div class="cl" style="top:132px"><span style="color:#484848">····</span><span style="color:#dcdcaa">slideTo</span><span style="color:#e6d59a">(</span><span style="color:#9cdcfe">id</span><span style="color:#e6d59a">)</span><span style="color:#484848">·</span><span style="color:#e6d59a">{</span></div>
<div class="cl" style="top:151px"><span style="color:#484848">······</span><span style="color:#569cd6">this</span><span style="color:#d4d4d4">.</span><span style="color:#9cdcfe">swiper</span><span style="color:#d4d4d4">.</span><span style="color:#dcdcaa">slideTo</span><span style="color:#d4d4d4">(</span><span style="color:#9cdcfe">id</span><span style="color:#d4d4d4">,</span><span style="color:#484848">·</span><span style="color:#b5cea8">1000</span><span style="color:#d4d4d4">,</span><span style="color:#484848">·</span><span style="color:#569cd6">false</span><span style="color:#d4d4d4">)</span></div>
<div class="cl" style="top:170px"><span style="color:#484848">····</span><span style="color:#e6d59a">}</span></div>
<div class="cl" style="top:208px"><span style="color:#484848">··</span><span style="color:#e6d59a">}</span></div>
<div class="cl" style="top:227px"><span style="color:#e6d59a">}</span></div>
<div class="cl" style="top:246px"><span style="color:#808080">&lt;/</span><span style="color:#569cd6">script</span><span style="color:#808080">&gt;</span></div>
<div class="cl" style="top:284px"><span style="color:#808080">&lt;</span><span style="color:#569cd6">style</span><span style="color:#808080">&gt;</span></div>
<div class="cl" style="top:303px"><span style="color:#484848">··</span><span style="color:#d7ba7d">.test</span><span style="color:#484848">·</span><span style="color:#e6d59a">{</span></div>
<div class="cl" style="top:322px"><span style="color:#484848">····</span></div>
<div class="cl" style="top:341px"><span style="color:#484848">····</span><span style="color:#9cdcfe">width</span><span style="color:#d4d4d4">:</span><span style="color:#484848">·</span><span style="color:#b5cea8">50px</span><span style="color:#d4d4d4">;</span></div>
<div class="cl" style="top:360px"><span style="color:#484848">··</span><span style="color:#e6d59a">}</span></div>
<div class="cl" style="top:379px"><span style="color:#808080">&lt;/</span><span style="color:#569cd6">style</span><span style="color:#808080">&gt;</span></div>
<svg class="a" style="left:98.8px;top:357px" width="9" height="4" viewBox="0 0 9 4" fill="none" stroke="#f14c4c" stroke-width="1.2"><path d="M0.3 2.2 C1.5 0.3 3 0.3 4.3 2 C5.5 3.6 7 3.6 8.7 1.6"/></svg>
</div>
<div class="a" style="left:348px;top:87px;width:876px;height:6px;background:linear-gradient(rgba(0,0,0,0.32),rgba(0,0,0,0));z-index:6"></div>
<div id="hover">
<span class="a" style="left:8px;top:4px;line-height:18px">Specifies the width of the content area, padding area or border area (depending</span>
<span class="a" style="left:8px;top:22px;line-height:18px">on 'box-sizing') of certain boxes.</span>
<span class="a" style="left:8px;top:48px;line-height:18px;transform:scaleX(0.925);transform-origin:0 0">Syntax: {1,2}</span>
<span class="a" style="left:8px;top:74px;line-height:18px;color:#3794ff;transform:scaleX(0.97);transform-origin:0 0">MDN Reference</span>
</div>
</body></html>
